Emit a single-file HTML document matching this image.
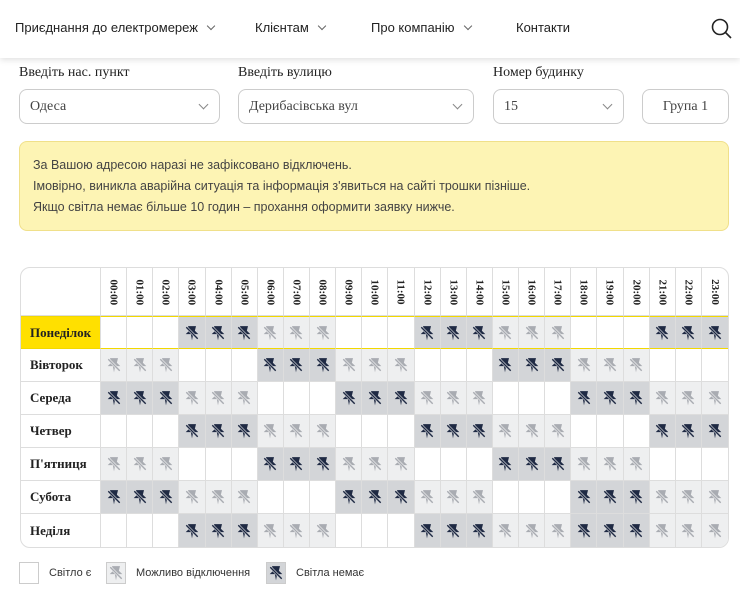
<!DOCTYPE html><html><head><meta charset="utf-8"><style>
*{box-sizing:border-box;margin:0;padding:0}
body{width:740px;height:592px;background:#fff;font-family:"Liberation Serif",serif;color:#222;position:relative;overflow:hidden}
.nav{position:absolute;left:0;top:0;width:740px;height:58px;background:#fff;box-shadow:0 2px 6px rgba(0,0,0,.12);font-family:"Liberation Sans",sans-serif;font-size:13px;color:#222}
.nav span{position:absolute;top:20px}
.chev{display:inline-block;width:6px;height:6px;border-right:1px solid #666;border-bottom:1px solid #666;transform:rotate(45deg);margin-left:10px;position:relative;top:-3px}
.lbl{position:absolute;top:65px;font-size:14px;color:#222}
.sel{position:absolute;top:89px;height:35px;border:1px solid #ccc;border-radius:8px;font-size:14px;color:#444;padding:9px 10px}
.sel i{position:absolute;right:12px;top:11px;width:7px;height:7px;border-right:1px solid #888;border-bottom:1px solid #888;transform:rotate(45deg)}
.alert{position:absolute;left:19px;top:141px;width:710px;height:90px;background:#fdf4b4;border:1px solid #f0e08a;border-radius:8px;font-family:"Liberation Sans",sans-serif;font-size:12.5px;color:#444;padding:13px 13px;line-height:21px}
table{position:absolute;left:20px;top:267px;width:709px;border-collapse:separate;border-spacing:0;border:1px solid #ddd;border-radius:10px;table-layout:fixed;overflow:hidden}
td,th{border-right:1px solid #ddd;border-bottom:1px solid #ddd;height:33px;text-align:center;padding:0}
td svg{display:block;margin:0 auto}
th{height:48px;font-size:11px;font-weight:bold}
th div{transform:rotate(90deg);white-space:nowrap}
td.d{font-weight:bold;font-size:13px;text-align:left;padding-left:9px}
tr.mon td{border-top:1px solid #f2d800;border-bottom:1px solid #f2d800}
tr.mon td.d{background:#ffe000}
tr td:last-child,tr th:last-child{border-right:none}
tr:last-child td{border-bottom:none}
.c1{background:#eeeff0}.c2{background:#d3d5d8}
.legend{position:absolute;top:560px;font-family:"Liberation Sans",sans-serif;font-size:11px;color:#333}
.box{position:absolute;top:562px;width:20px;height:22px;border:1px solid #ccc}
</style></head><body>
<div class="nav">
<span style="left:15px">Приєднання до електромереж<i class="chev"></i></span>
<span style="left:255px">Клієнтам<i class="chev"></i></span>
<span style="left:371px">Про компанію<i class="chev"></i></span>
<span style="left:516px">Контакти</span>
<svg style="position:absolute;left:711px;top:18px" width="22" height="22" viewBox="0 0 22 22"><circle cx="9" cy="9" r="7.5" fill="none" stroke="#222" stroke-width="1.6"/><path d="M14.5 14.5L20 20" stroke="#222" stroke-width="1.6"/></svg>
</div>
<div class="lbl" style="left:19px">Введіть нас. пункт</div>
<div class="lbl" style="left:238px">Введіть вулицю</div>
<div class="lbl" style="left:493px">Номер будинку</div>
<div class="sel" style="left:19px;width:201px">Одеса<i></i></div>
<div class="sel" style="left:238px;width:236px">Дерибасівська вул<i></i></div>
<div class="sel" style="left:493px;width:131px">15<i></i></div>
<div class="sel" style="left:642px;width:87px;text-align:center">Група 1</div>
<div class="alert">За Вашою адресою наразі не зафіксовано відключень.<br>Імовірно, виникла аварійна ситуація та інформація з'явиться на сайті трошки пізніше.<br>Якщо світла немає більше 10 годин – прохання оформити заявку нижче.</div>
<table id="t"><colgroup><col style="width:80px"></colgroup>
<tr><th></th><th><div>00:00</div></th><th><div>01:00</div></th><th><div>02:00</div></th><th><div>03:00</div></th><th><div>04:00</div></th><th><div>05:00</div></th><th><div>06:00</div></th><th><div>07:00</div></th><th><div>08:00</div></th><th><div>09:00</div></th><th><div>10:00</div></th><th><div>11:00</div></th><th><div>12:00</div></th><th><div>13:00</div></th><th><div>14:00</div></th><th><div>15:00</div></th><th><div>16:00</div></th><th><div>17:00</div></th><th><div>18:00</div></th><th><div>19:00</div></th><th><div>20:00</div></th><th><div>21:00</div></th><th><div>22:00</div></th><th><div>23:00</div></th></tr>
<tr class="mon"><td class="d">Понеділок</td></tr>
<tr><td class="d">Вівторок</td></tr>
<tr><td class="d">Середа</td></tr>
<tr><td class="d">Четвер</td></tr>
<tr><td class="d">П'ятниця</td></tr>
<tr><td class="d">Субота</td></tr>
<tr><td class="d">Неділя</td></tr>
</table>
<div class="box" style="left:19px"></div><div class="legend" style="left:49px;top:567px">Світло є</div>
<div class="box c1" style="left:106px" id="l1"></div><div class="legend" style="left:136px;top:567px">Можливо відключення</div>
<div class="box c2" style="left:266px" id="l2"></div><div class="legend" style="left:296px;top:567px">Світла немає</div>
<script>
var P=["000222111000222111000222","111000222111000222111000","222111000222111000222111","000222111000222111000222","111000222111000222111000","222111000222111000222111","000222111000222111222111"];
function ic(c){var bg=c=="#1f2a44"?"#d3d5d8":"#eeeff0";return '<svg width="16" height="16" viewBox="0 0 14 14"><path d="M3.5 1h7l-1 4 3 3H8l-1 5.5-1-5.5H1.5l3-3z" fill="'+c+'"/><path d="M1.5 1.5l11 11" stroke="'+bg+'" stroke-width="2.4"/><path d="M2 2l10 10" stroke="'+c+'" stroke-width="1.2"/></svg>';}
var rows=document.getElementById('t').rows;
for(var r=0;r<7;r++){var h='';for(var k=0;k<24;k++){var v=P[r][k];h+=v=='0'?'<td></td>':v=='1'?'<td class="c1">'+ic('#a9acb2')+'</td>':'<td class="c2">'+ic('#1f2a44')+'</td>';}rows[r+1].insertAdjacentHTML('beforeend',h);}
document.getElementById('l1').innerHTML='<div style="margin:2px 0 0 1px">'+ic('#a9acb2')+'</div>';
document.getElementById('l2').innerHTML='<div style="margin:2px 0 0 1px">'+ic('#1f2a44')+'</div>';
</script>
</body></html>
